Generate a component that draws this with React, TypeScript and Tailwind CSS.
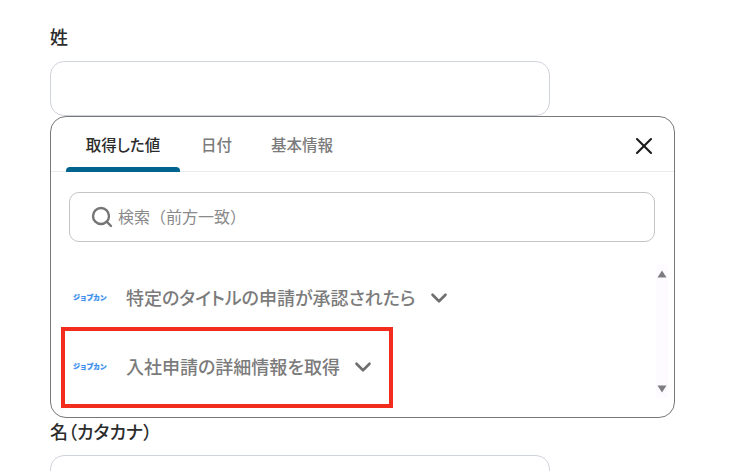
import { ChevronDown, Search, X } from "lucide-react";

const font = { fontFamily: '"Noto Sans CJK JP", "Noto Sans", sans-serif' };

function AppRow({ title, gap }: { title: string; gap: string }) {
  return (
    <div className="flex h-[69px] items-center">
      <span className="w-[53px] whitespace-nowrap pb-[1px] text-[7px] font-black leading-none tracking-[-0.3px] text-[#3d8fee] [-webkit-text-stroke:0.2px_#3d8fee]">ジョブカン</span>
      <span className="pb-[2px] text-[18px] font-medium leading-6 text-[#7b7b7b] whitespace-nowrap [font-feature-settings:'palt']">{title}</span>
      <ChevronDown className={`${gap} h-[26px] w-[26px] text-[#6f6f6f]`} strokeWidth={2.4} />
    </div>
  );
}

export default function App() {
  return (
    <div className="relative h-[471px] w-[734px] overflow-hidden bg-white px-[50px] pt-[24px]" style={font}>
      <div className="text-[18px] font-medium leading-[24px] text-[#2c2c2c]">姓</div>
      <div className="mt-[13px] h-[55px] w-[500px] rounded-[14px] border border-[#cfd3dc]" />

      <div className="h-[302px] w-[625px] rounded-[16px] border border-[#77777a] bg-white">
        <div className="flex h-[55px] items-stretch border-b border-[#ebebeb] pl-[15px] pr-[16px] [font-feature-settings:'palt']">
          <div className="relative flex w-[114px] items-center justify-center pt-[1px] text-[15.5px] font-medium text-[#2c2c2c]">
            取得した値
            <div className="absolute bottom-[-1px] left-0 h-[5px] w-full rounded-t-[4px] bg-[#00648f]" />
          </div>
          <div className="ml-[21px] flex items-center pt-[1px] text-[15.5px] font-medium text-[#7b7b7b]">日付</div>
          <div className="ml-[39px] flex items-center pt-[1px] text-[15.5px] font-medium text-[#7b7b7b]">基本情報</div>
          <X className="ml-auto mt-[15px] h-[28px] w-[28px] text-[#1c1c1c]" strokeWidth={1.8} />
        </div>

        <div className="ml-[18px] mr-[19px] mt-[20px] flex h-[50px] items-center rounded-[10px] border border-[#c4c4c8] pl-[20px]">
          <Search className="h-[24px] w-[24px] text-[#757575]" strokeWidth={2.4} />
          <span className="ml-[4px] pb-[2px] text-[16px] text-[#8a8a8a]">検索（前方一致）</span>
        </div>

        <div className="relative mt-[21px] pl-[22px]">
          <AppRow title="特定のタイトルの申請が承認されたら" gap="ml-[11px]" />
          <AppRow title="入社申請の詳細情報を取得" gap="ml-[10px]" />
          <div className="absolute right-[6px] top-[2px] flex h-[133px] w-[12px] flex-col items-center justify-between bg-[#fdfbff] py-[5px]">
            <svg width="10" height="8" viewBox="0 0 10 8"><path d="M5 0.5 9.5 7.5H0.5Z" fill="#7d7d80" /></svg>
            <svg width="10" height="8" viewBox="0 0 10 8"><path d="M0.5 0.5H9.5L5 7.5Z" fill="#7d7d80" /></svg>
          </div>
        </div>
      </div>

      <div className="mt-[1px] text-[18px] font-medium leading-[24px] text-[#2c2c2c] [font-feature-settings:'palt']">名（カタカナ）</div>
      <div className="mt-[12px] h-[55px] w-[500px] rounded-[14px] border border-[#cfd3dc]" />

      {/* red annotation box */}
      <div className="absolute left-[61px] top-[327px] h-[81px] w-[332px] border-[4px] border-[#f32d1e]" />
    </div>
  );
}
